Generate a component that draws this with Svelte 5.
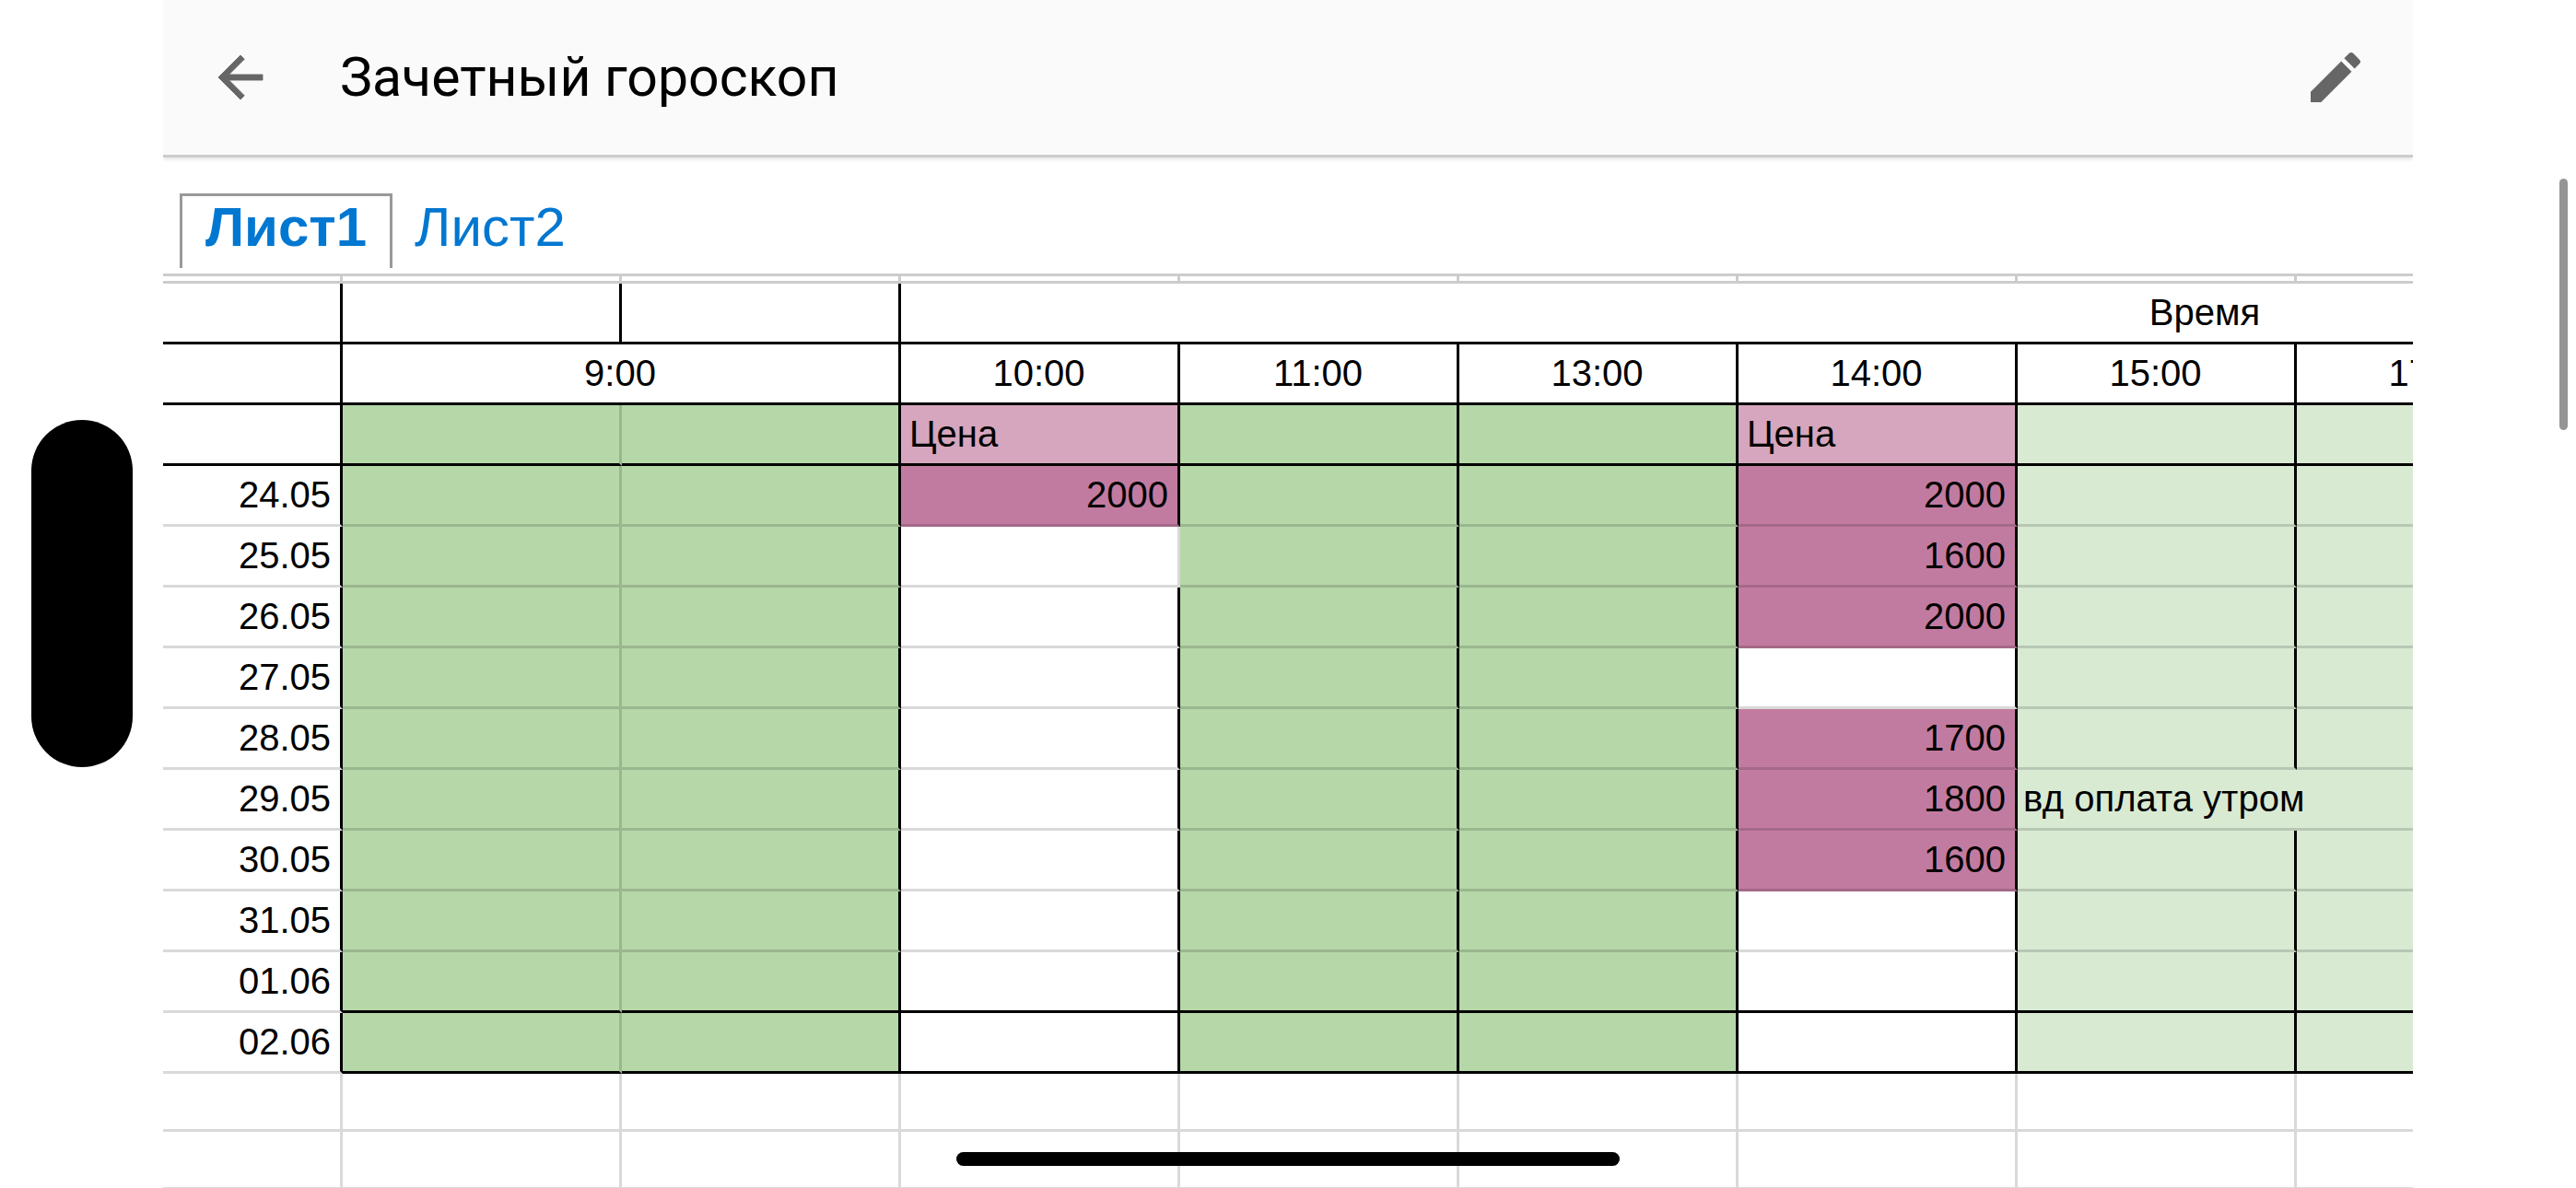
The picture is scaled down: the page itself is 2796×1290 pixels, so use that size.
<script>
    const times = ["10:00", "11:00", "13:00", "14:00", "15:00", "17:00", "", "", "", ""];

    const days = [
        { date: "24.05", morning: 2000, day: 2000 },
        { date: "25.05", day: 1600 },
        { date: "26.05", day: 2000 },
        { date: "27.05" },
        { date: "28.05", day: 1700 },
        { date: "29.05", day: 1800, note: "вд оплата утром" },
        { date: "30.05", day: 1600 },
        { date: "31.05" },
        { date: "01.06" },
        { date: "02.06" }
    ];

    const sheets = ["Лист1", "Лист2"];
    let active = $state("Лист1");
</script>

<div class="screen">
    <div class="island"></div>

    <div class="page">
        <header>
            <button class="icon back" aria-label="Назад">
                <svg viewBox="0 0 24 24"><path d="M20 11H7.83l5.59-5.59L12 4l-8 8 8 8 1.41-1.41L7.83 13H20v-2z" /></svg>
            </button>
            <h1>Зачетный гороскоп</h1>
            <button class="icon" aria-label="Изменить">
                <svg viewBox="0 0 24 24"><path d="M3 17.25V21h3.75L17.81 9.94l-3.75-3.75L3 17.25zM20.71 7.04c.39-.39.39-1.02 0-1.41l-2.34-2.34c-.39-.39-1.02-.39-1.41 0l-1.83 1.83 3.75 3.75 1.83-1.83z" /></svg>
            </button>
        </header>

        <nav>
            {#each sheets as sheet}
                <button class="tab" class:active={active === sheet} onclick={() => active = sheet}>{sheet}</button>
            {/each}
        </nav>

        <main>
            <table>
                <colgroup>
                    <col class="dates" />
                    {#each Array(11) as _}
                        <col class="slot" />
                    {/each}
                    <col class="narrow" />
                </colgroup>
                <thead>
                    <tr class="freeze">
                        {#each Array(13) as _}
                            <td></td>
                        {/each}
                    </tr>
                    <tr>
                        <td></td>
                        <td></td>
                        <td></td>
                        <th colspan="10">Время</th>
                    </tr>
                    <tr>
                        <td></td>
                        <th colspan="2">9:00</th>
                        {#each times as time}
                            <th>{time}</th>
                        {/each}
                    </tr>
                </thead>
                <tbody>
                    <tr class="ruled">
                        <td></td>
                        <td class="green soft"></td>
                        <td class="green"></td>
                        <td class="price">Цена</td>
                        <td class="green"></td>
                        <td class="green"></td>
                        <td class="price">Цена</td>
                        {#each Array(6) as _}
                            <td class="light"></td>
                        {/each}
                    </tr>
                    {#each days as row, i}
                        <tr class:closing={i >= days.length - 2}>
                            <td class="date">{row.date}</td>
                            <td class="green soft"></td>
                            <td class="green"></td>
                            <td class:sum={row.morning} class:soft={row.date === "25.05"}>{row.morning ?? ""}</td>
                            <td class="green"></td>
                            <td class="green"></td>
                            <td class:sum={row.day}>{row.day ?? ""}</td>
                            <td class="light" class:note={row.note}>{row.note ?? ""}</td>
                            {#each Array(5) as _}
                                <td class="light"></td>
                            {/each}
                        </tr>
                    {/each}
                    {#each Array(3) as _}
                        <tr class="empty">
                            {#each Array(13) as _}
                                <td></td>
                            {/each}
                        </tr>
                    {/each}
                </tbody>
            </table>
        </main>
    </div>

    <div class="scrollbar"></div>
    <div class="home"></div>
</div>

<style>
    :global(body) {
        margin: 0;
        background: #fff;
    }

    .screen {
        position: relative;
        box-sizing: border-box;
        height: 100vh;
        padding: 0 177px;
        overflow: hidden;
        font-family: "Liberation Sans", Arial, sans-serif;
        color: #000;
    }

    header {
        display: flex;
        align-items: center;
        gap: 72px;
        height: 168px;
        padding: 0 48px;
        background: #fafafa;
        border-bottom: 3px solid #ccc;
        box-shadow: 0 3px 3px rgba(0, 0, 0, 0.08);
        clip-path: inset(0 0 -12px 0);
    }

    h1 {
        flex: 1;
        margin: 0;
        font: 400 59px/72px Roboto, sans-serif;
    }

    button {
        margin: 0;
        padding: 0;
        border: 0;
        background: none;
        font-family: inherit;
        cursor: pointer;
    }

    .icon {
        width: 72px;
        height: 72px;
    }

    .icon svg {
        display: block;
        fill: #666;
    }

    .back svg {
        stroke: #666;
        stroke-width: 0.3;
    }

    nav {
        display: flex;
        padding: 39px 18px 6px;
        border-bottom: 3px solid #ccc;
    }

    .tab {
        height: 81px;
        padding: 0 21px 10px;
        border: 3px solid transparent;
        border-bottom: 0;
        font-size: 60px;
        line-height: 68px;
        color: #0077d1;
    }

    .tab.active {
        padding: 0 25px 10px;
        border-color: #999;
        font-weight: 700;
    }

    main {
        overflow: hidden;
    }

    table {
        width: 3635px;
        table-layout: fixed;
        border-collapse: separate;
        border-spacing: 0;
        font-size: 40px;
        line-height: 46px;
    }

    .dates {
        width: 195px;
    }

    .slot {
        width: 303px;
    }

    .narrow {
        width: 107px;
    }

    td,
    th {
        box-sizing: border-box;
        height: 66px;
        padding: 0 10px 2px 9px;
        border: solid #000;
        border-width: 0 3px 3px 0;
        font-weight: 400;
        white-space: nowrap;
    }

    .freeze td {
        height: 8px;
        padding: 0;
        border-color: #ccc;
    }

    tbody td {
        border-bottom-color: rgba(0, 0, 0, 0.15);
    }

    .ruled td,
    .closing td:not(.date) {
        border-bottom-color: #000;
    }

    .empty td {
        height: 63px;
        border-color: rgba(0, 0, 0, 0.15);
    }

    td.soft {
        border-right-color: rgba(0, 0, 0, 0.15);
    }

    .green {
        background: #b6d7a8;
    }

    .light {
        background: #d9ead3;
    }

    .price {
        background: #d5a6bd;
    }

    .sum {
        background: #c27ba0;
    }

    .date,
    .sum {
        text-align: right;
    }

    /* long text runs over into the next cell */
    .note {
        position: relative;
        padding: 0 6px 2px;
        border-right: 0;
    }

    .island {
        position: absolute;
        top: 456px;
        left: 34px;
        width: 110px;
        height: 377px;
        border-radius: 55px;
        background: #000;
    }

    .scrollbar {
        position: absolute;
        top: 194px;
        right: 9px;
        width: 9px;
        height: 273px;
        border-radius: 5px;
        background: #959595;
    }

    .home {
        position: absolute;
        bottom: 24px;
        left: 50%;
        width: 720px;
        height: 15px;
        margin-left: -360px;
        border-radius: 8px;
        background: #000;
    }
</style>
